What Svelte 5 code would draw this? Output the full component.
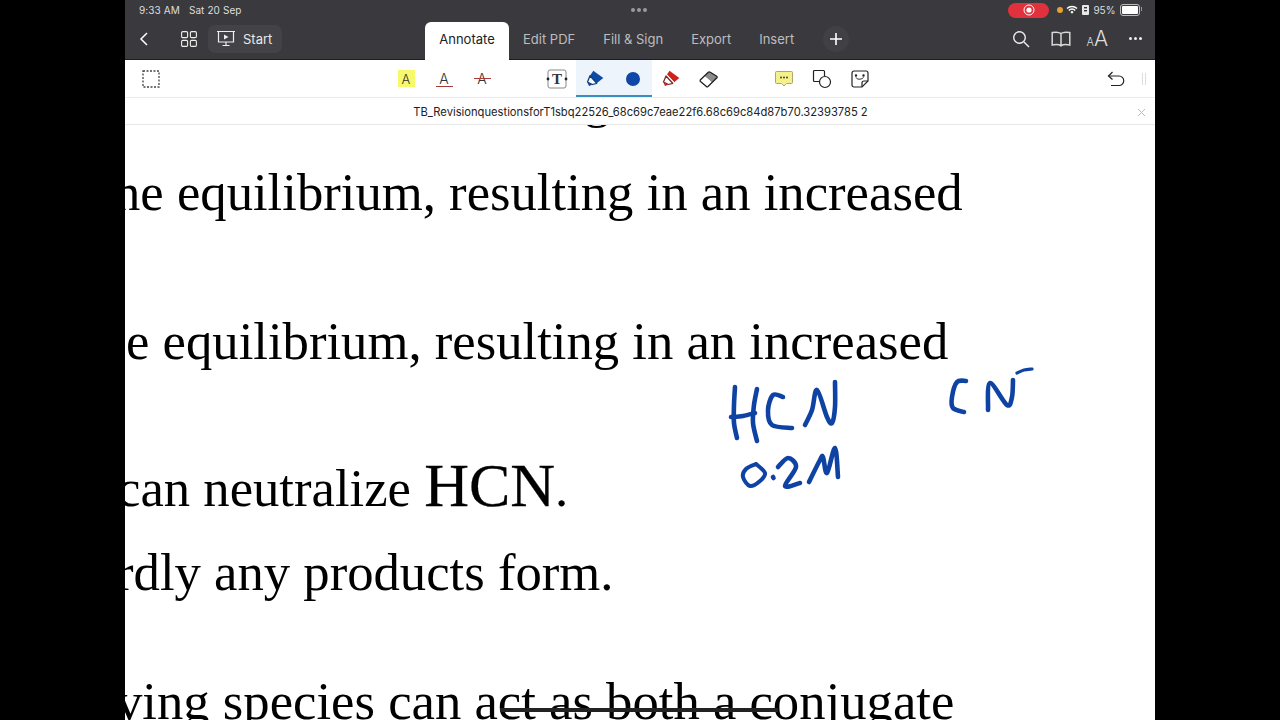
<script lang="ts">
  const tabs = ['Edit PDF', 'Fill & Sign', 'Export', 'Insert'];

  // handwriting, as points traced off the page (x, y in screen pixels)
  const ink: { pts: number[][]; w?: number }[] = [
    { pts: [[735, 387], [734, 405], [734, 423], [737, 438]] },
    { pts: [[731, 417], [743, 416], [755, 413]] },
    { pts: [[757, 389], [754, 405], [753, 423], [757, 441]] },
    { pts: [[783, 397], [773, 395], [768, 410], [772, 425], [792, 428]] },
    { pts: [[805, 425], [812, 410], [817, 390], [827, 417], [832, 423], [835, 407], [835, 382]] },
    { pts: [[756, 464], [746, 469], [743, 477], [750, 486], [760, 481], [765, 473], [756, 464]], w: 4 },
    { pts: [[773, 477], [773.5, 478]], w: 4.6 },
    { pts: [[778, 467], [788, 458], [796, 467], [785, 486], [800, 483]] },
    { pts: [[809, 482], [820, 460], [823, 457], [827, 473], [835, 448], [838, 477]] },
    { pts: [[966, 381], [957, 382], [952, 397], [953, 408], [964, 412]] },
    { pts: [[988, 410], [990, 383], [1007, 405], [1012, 397], [1013, 380]] },
    { pts: [[1017, 373], [1024, 370], [1032, 369]], w: 3.2 }
  ];

  function smooth(pts: number[][]): string {
    let d = `M${pts[0][0]} ${pts[0][1]}`;
    for (let i = 0; i < pts.length - 1; i++) {
      const p0 = pts[i - 1] ?? pts[i];
      const p1 = pts[i];
      const p2 = pts[i + 1];
      const p3 = pts[i + 2] ?? p2;
      const c1x = p1[0] + (p2[0] - p0[0]) / 6;
      const c1y = p1[1] + (p2[1] - p0[1]) / 6;
      const c2x = p2[0] - (p3[0] - p1[0]) / 6;
      const c2y = p2[1] - (p3[1] - p1[1]) / 6;
      d += `C${c1x} ${c1y} ${c2x} ${c2y} ${p2[0]} ${p2[1]}`;
    }
    return d;
  }
</script>

<div class="screen">
  <header class="top">
    <div class="status">
      <span class="clock">9:33 AM</span>
      <span class="clock date">Sat 20 Sep</span>
      <span class="dots"><i></i><i></i><i></i></span>
      <div class="status-right">
        <span class="rec">
          <svg width="12" height="12" viewBox="0 0 12 12"><circle cx="6" cy="6" r="5" fill="none" stroke="#fff" stroke-width="1"/><circle cx="6" cy="6" r="2.6" fill="#fff"/></svg>
        </span>
        <span class="orange"></span>
        <svg width="12" height="10" viewBox="0 0 12 10"><path d="M1 3.6a7 7 0 0 1 10 0M2.8 5.4a4.4 4.4 0 0 1 6.4 0" fill="none" stroke="#fff" stroke-width="1.4"/><path d="M4.4 7l1.6-1.2L7.6 7 6 8.8z" fill="#fff"/></svg>
        <svg width="7" height="10" viewBox="0 0 7 10"><rect x="0" y="0" width="7" height="10" rx="1" fill="#e8e8e8"/><rect x="2" y="2" width="3" height="1.4" fill="#333"/><rect x="2" y="5" width="3" height="1.4" fill="#333"/></svg>
        <span class="pct">95%</span>
        <span class="battery"><b></b></span>
      </div>
    </div>
    <div class="nav">
      <div class="nav-left">
        <svg class="back" width="10" height="16" viewBox="0 0 10 16"><path d="M8 2 2 8l6 6" fill="none" stroke="#fff" stroke-width="1.5"/></svg>
        <svg class="grid" width="16" height="16" viewBox="0 0 16 16" fill="none" stroke="#eee" stroke-width="1.1"><rect x=".6" y=".6" width="6" height="6" rx="1.2"/><rect x="9.400" y=".6" width="6" height="6" rx="1.2"/><rect x=".6" y="9.400" width="6" height="6" rx="1.2"/><rect x="9.400" y="9.400" width="6" height="6" rx="1.2"/></svg>
        <span class="start">
          <svg width="20" height="18" viewBox="0 0 20 18" fill="none" stroke="#eee" stroke-width="1.2"><path d="M1 1.500h18M2.500 1.500v10.500h15V1.500M10 12v3M6.500 15.500h7"/><path d="M8 4.500l4.500 2.500L8 9.500z" fill="#eee" stroke="none"/></svg>
          Start
        </span>
      </div>
      <nav class="tabs">
        <span class="tab active">Annotate</span>
        {#each tabs as t}
          <span class="tab">{t}</span>
        {/each}
        <span class="plus">
          <svg width="12" height="12" viewBox="0 0 12 12"><path d="M6 0v12M0 6h12" stroke="#fff" stroke-width="1.600"/></svg>
        </span>
      </nav>
      <div class="nav-right">
        <svg width="18" height="18" viewBox="0 0 18 18" fill="none" stroke="#eee" stroke-width="1.400"><circle cx="7.500" cy="7.500" r="5.800"/><path d="m12 12 5 5"/></svg>
        <svg class="book" width="20" height="16" viewBox="0 0 20 16" fill="none" stroke="#d8d8d8" stroke-width="1.500"><path d="M10 2.500C8 1 4 1 1.200 1.600V14c3-.6 6.800-.6 8.800.8 2-1.400 5.800-1.400 8.800-.8V1.600C16 1 12 1 10 2.500zM10 2.500v12.300"/></svg>
        <span class="aa"><small>A</small>A</span>
        <span class="more"><i></i><i></i><i></i></span>
      </div>
    </div>
  </header>

  <div class="toolbar">
    <svg class="select" width="18" height="18" viewBox="0 0 18 18"><rect x="1" y="1" width="16" height="16" fill="none" stroke="#444" stroke-width="1.300" stroke-dasharray="2 1.500"/></svg>
    <div class="tools">
      <span class="tool"><span class="hi">A</span></span>
      <span class="tool"><span class="under">A</span></span>
      <span class="tool"><span class="strike">A</span></span>
      <span class="tool t-text">
        <svg width="22" height="20" viewBox="0 0 22 20"><rect x="2" y="1" width="18" height="18" rx="2" fill="none" stroke="#888" stroke-width="1"/><circle cx="2" cy="10" r="1.400" fill="#222"/><circle cx="20" cy="10" r="1.400" fill="#222"/><text x="11" y="15" text-anchor="middle" font-family="Liberation Serif" font-size="15" font-weight="700" fill="#333">T</text></svg>
      </span>
      <span class="selected">
        <span class="tool">
          <svg width="20" height="20" viewBox="0 0 20 20"><path d="M8.300 1.700 18.300 9l-6.600 5.300L5 6.700z" fill="#0e4ba6"/><path d="M5 6.700 2.500 13l5 2.500 4.200-1.200z" fill="#fff" stroke="#0e3f8a" stroke-width="1.300" stroke-linejoin="round"/><path d="M2.300 13.300 4 16.900l3.300-1.200z" fill="#0e3f8a"/></svg>
        </span>
        <span class="tool"><span class="dot"></span></span>
      </span>
      <span class="tool">
        <svg width="20" height="20" viewBox="0 0 20 20"><path d="M8.500 1.700 18.300 9l-5 4.200L6 5.500z" fill="#d0211c"/><path d="M6 5.500 13.300 13.200 11.700 14.500 5 7z" fill="#fff"/><path d="M5 7 2.500 13l5 2.500 4.200-1.200z" fill="#fff" stroke="#7a2a2a" stroke-width="1.300" stroke-linejoin="round"/><path d="M2.300 13.300 4 16.900l3.300-1.200z" fill="#c02020"/></svg>
      </span>
      <span class="tool">
        <svg width="20" height="20" viewBox="0 0 20 20"><path d="M9.300 3.300a1.500 1.500 0 0 1 2 0l6.400 4a1 1 0 0 1 .2 1.500L13 13.500 5.500 7z" fill="#8c8c8c"/><path d="M5.500 7 13 13.500l-4 4a1.200 1.200 0 0 1-1.600 0l-5.900-5a1.200 1.200 0 0 1 0-1.700z" fill="#fff"/><path d="M9.300 3.300a1.500 1.500 0 0 1 2 0l6.400 4a1 1 0 0 1 .2 1.500l-8.900 8.700a1.200 1.200 0 0 1-1.600 0l-5.900-5a1.200 1.200 0 0 1 0-1.700z" fill="none" stroke="#222" stroke-width="1.300"/></svg>
      </span>
      <span class="tool t-note">
        <svg width="20" height="18" viewBox="0 0 20 18"><path d="M2.500 1.500h15a1 1 0 0 1 1 1v10a1 1 0 0 1-1 1H12.500L10 16l-2.500-2.500h-5a1 1 0 0 1-1-1v-10a1 1 0 0 1 1-1z" fill="#f5f08c" stroke="#a8a870" stroke-width="1"/><circle cx="7" cy="7.500" r=".9" fill="#333"/><circle cx="10" cy="7.500" r=".9" fill="#333"/><circle cx="13" cy="7.500" r=".9" fill="#333"/></svg>
      </span>
      <span class="tool">
        <svg width="20" height="20" viewBox="0 0 20 20" fill="none" stroke="#222" stroke-width="1.200"><path d="M7 12.500H2.500a1 1 0 0 1-1-1V2.500a1 1 0 0 1 1-1h9a1 1 0 0 1 1 1V7"/><circle cx="13" cy="13" r="5.500"/></svg>
      </span>
      <span class="tool">
        <svg width="18" height="18" viewBox="0 0 18 18" fill="none" stroke="#222" stroke-width="1.200"><path d="M3 1h12a2 2 0 0 1 2 2v8l-6 6H3a2 2 0 0 1-2-2V3a2 2 0 0 1 2-2z"/><path d="M11 17v-4a2 2 0 0 1 2-2h4"/><path d="M5 7.500c1 2 5 2.500 7.500 0" stroke-width="1"/><circle cx="5" cy="5.500" r=".6" fill="#222"/><circle cx="12.500" cy="5.500" r=".6" fill="#222"/></svg>
      </span>
    </div>
    <svg class="undo" width="18" height="16" viewBox="0 0 18 16" fill="none" stroke="#222" stroke-width="1.200"><path d="M5.500 1 1.500 5l4 3.500"/><path d="M1.500 5H12a4.700 4.700 0 0 1 0 9.500H4"/></svg>
    <span class="grip"></span>
  </div>

  <div class="filebar">
    <span class="filename">TB_RevisionquestionsforT1sbq22526_68c69c7eae22f6.68c69c84d87b70.32393785 2</span>
    <svg class="close" width="9" height="9" viewBox="0 0 9 9"><path d="m1 1 7 7M8 1 1 8" stroke="#bbb" stroke-width="1"/></svg>
  </div>

  <main class="page">
    <p class="l0">g</p>
    <p class="l1">ne equilibrium, resulting in an increased</p>
    <p class="l2">e equilibrium, resulting in an increased</p>
    <p class="l3">can neutralize <span class="big">HCN</span>.</p>
    <p class="l4">rdly any products form.</p>
    <p class="l5">ving species can act as both a conjugate</p>

    <svg class="ink" viewBox="125 125 1030 595" fill="none" stroke="#0f43a3" stroke-linecap="round" stroke-linejoin="round">
      {#each ink as s}
        <path d={smooth(s.pts)} stroke-width={s.w ?? 4.6} />
      {/each}
    </svg>
    <span class="strikeout"></span>
  </main>
</div>

<style>
  :global(body) { margin: 0; background: #000; }
  .screen {
    width: 1030px; height: 720px; margin: 0 auto;
    background: #fff; overflow: hidden;
    display: flex; flex-direction: column;
    font-family: Inter, "Liberation Sans", sans-serif;
  }
  .top { height: 60px; background: #3a3a3e; border-bottom: 1px solid #1d1d1f; box-sizing: border-box; flex: none; color: #e8e8e8; }
  .status { height: 20px; display: flex; align-items: center; padding: 0 14px; position: relative; font-size: 10px; }
  .clock { color: #ddd; letter-spacing: .1px; }
  .date { margin-left: 9px; }
  .dots { position: absolute; left: 506px; top: 8px; display: flex; gap: 2px; }
  .dots i { width: 4px; height: 4px; border-radius: 50%; background: #9a9a9e; }
  .status-right { margin-left: auto; margin-right: 1px; display: flex; align-items: center; gap: 3.500px; }
  .rec { width: 41px; height: 15px; border-radius: 8px; background: #e0313c; display: flex; align-items: center; justify-content: center; margin-right: 4px; }
  .orange { width: 6px; height: 6px; border-radius: 50%; background: #e8a030; }
  .pct { font-size: 10px; color: #ddd; margin-left: 1px; }
  .battery { width: 16px; height: 8px; border: 1px solid #bbb; border-radius: 3px; padding: 1px; margin-left: 1px; display: flex; position: relative; }
  .battery::after { content: ''; position: absolute; right: -3px; top: 2px; width: 1px; height: 4px; background: #999; }
  .battery b { flex: 1; background: #fff; border-radius: 1px; }
  .nav { height: 37px; display: flex; align-items: center; position: relative; }
  .nav-left { display: flex; align-items: center; padding-left: 14px; }
  .back { margin-right: 32px; }
  .grid { margin-right: 11px; }
  .start {
    display: flex; align-items: center; gap: 7px;
    padding: 0 10px 0 8px; height: 28px; border-radius: 7px;
    background: #434347; font-size: 13px; color: #e8e8e8;
  }
  .tabs { position: absolute; left: 300px; top: 0; bottom: -3px; display: flex; align-items: flex-end; }
  .tab { height: 38px; line-height: 35px; padding: 0 14px; font-size: 13px; color: #bdbdc0; box-sizing: border-box; }
  .tab.active { background: #fff; color: #222; border-radius: 6px 6px 0 0; width: 84px; padding: 0; text-align: center; }
  .plus { align-self: center; width: 26px; height: 26px; border-radius: 50%; background: #414145; margin: 0 0 3px 15px; display: flex; align-items: center; justify-content: center; }
  .nav-right { margin-left: auto; display: flex; align-items: center; padding-right: 13px; }
  .book { margin-left: 21px; }
  .aa { font-size: 21px; color: #ddd; font-weight: 300; margin-left: 16px; width: 22px; line-height: 1; white-space: nowrap; }
  .aa small { font-size: 11px; }
  .more { display: flex; gap: 1.500px; margin-left: 20px; }
  .more i { width: 3.500px; height: 3.500px; border-radius: 50%; background: #eee; }
  .toolbar { height: 38px; flex: none; display: flex; align-items: center; position: relative; border-bottom: 1px solid #ececec; box-sizing: border-box; }
  .select { margin-left: 17px; }
  .tools { position: absolute; left: 262px; top: 0; bottom: 0; display: flex; align-items: center; }
  .tool { width: 38px; height: 37px; display: flex; align-items: center; justify-content: center; flex: none; }
  .hi { width: 17px; height: 17px; background: #f6f96a; color: #333; font-size: 13px; font-weight: 300; display: flex; align-items: center; justify-content: center; }
  .under { color: #333; font-size: 14px; font-weight: 300; border-bottom: 1.500px solid #a83a3a; line-height: 15px; width: 17px; text-align: center; }
  .strike { color: #333; font-size: 14px; font-weight: 300; width: 17px; text-align: center; position: relative; line-height: 15px; }
  .strike::after { content: ''; position: absolute; left: 0; right: 0; top: 7px; height: 1.300px; background: #a83a3a; }
  .t-text { margin-left: 37px; }
  .selected { display: flex; width: 76px; height: 37px; background: #eef4fb; border-bottom: 2px solid #3b8ec4; box-sizing: border-box; }
  .dot { width: 14px; height: 14px; border-radius: 50%; background: #0e47a8; }
  .t-note { margin-left: 37px; }
  .undo { position: absolute; left: 982px; top: 11px; }
  .grip { position: absolute; left: 1017px; top: 13px; width: 4px; height: 12px; border-left: 1px solid #ddd; border-right: 1px solid #ddd; box-sizing: border-box; }
  .filebar { height: 27px; flex: none; position: relative; display: flex; align-items: center; justify-content: center; border-bottom: 1px solid #e8e8e8; box-sizing: border-box; background: #fff; z-index: 1; padding-top: 1px; }
  .filename { font-size: 11.200px; color: #222; margin-left: 1px; white-space: nowrap; }
  .close { position: absolute; right: 9px; top: 10px; }
  .page { flex: 1; position: relative; overflow: hidden; background: #fff; font-family: "Liberation Serif", serif; font-size: 52.700px; color: #000; }
  .page p { margin: 0; white-space: nowrap; line-height: 60px; }
  .big { font-size: 62px; line-height: 0; -webkit-text-stroke: .3px #000; }
  p.l0 { margin: -56px 0 0 459px; }
  p.l1 { margin: 33px 0 0 -11px; }
  p.l2 { margin: 89px 0 0 1px; }
  p.l3 { margin: 87px 0 0 -8px; }
  p.l4 { margin: 24px 0 0 -9px; }
  p.l5 { margin: 69px 0 0 -9px; }
  .ink { position: absolute; left: 0; top: 0; width: 1030px; height: 595px; }
  .strikeout { position: absolute; left: 375px; top: 583px; width: 278px; height: 4px; background: #222; }
</style>
